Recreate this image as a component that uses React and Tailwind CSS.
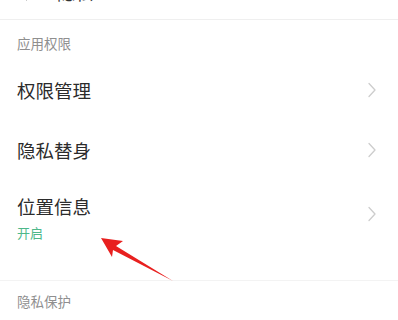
import React from "react";

const Chevron = () => (
  <svg width="10" height="16" viewBox="0 0 10 16" className="shrink-0">
    <path d="M2 1.5 L8 8 L2 14.5" fill="none" stroke="#cdcdcd" strokeWidth="1.3" strokeLinecap="round" strokeLinejoin="round" />
  </svg>
);

export default function App() {
  return (
    <div
      className="relative w-[398px] h-[320px] overflow-hidden bg-white"
      style={{ fontFamily: '"Noto Sans CJK SC", "Noto Sans", sans-serif' }}
    >
      <div className="h-[20px] overflow-hidden border-b border-[#efefef] flex items-end pb-[18px]">
        <div className="flex items-center gap-[28px] pl-[19px]">
          <svg width="10" height="18" viewBox="0 0 10 18">
            <path d="M8 1 L1 9 L8 17" fill="none" stroke="#444" strokeWidth="1.6" />
          </svg>
          <span className="text-[18px] leading-none text-[#333]">隐私</span>
        </div>
      </div>

      <div className="h-[40px] pt-[17px] pl-[17px] text-[13.5px] leading-none text-[#8f8f8f]">应用权限</div>

      <div className="h-[60px] flex items-center justify-between pl-[17px] pr-[21px]">
        <span className="text-[18.5px] leading-none text-[#2b2b2b]">权限管理</span>
        <Chevron />
      </div>
      <div className="h-[60px] flex items-center justify-between pl-[17px] pr-[21px]">
        <span className="text-[18.5px] leading-none text-[#2b2b2b]">隐私替身</span>
        <Chevron />
      </div>
      <div className="h-[101px] flex items-start justify-between pl-[17px] pr-[21px] pt-[17px] border-b border-[#f3f3f3]">
        <div className="flex flex-col gap-[10px]">
          <span className="text-[18.5px] leading-none text-[#2b2b2b]">位置信息</span>
          <span className="text-[13px] leading-none text-[#4db88a]">开启</span>
        </div>
        <div className="pt-[9px]">
          <Chevron />
        </div>
      </div>

      <div className="pt-[14px] pl-[17px] text-[13.5px] leading-none text-[#8f8f8f]">隐私保护</div>

      <svg className="absolute left-0 top-0" width="398" height="320" viewBox="0 0 398 320">
        <polygon points="101,238 123,241 116,246 173,281 113,250 112,257" fill="#e8201f" />
      </svg>
    </div>
  );
}
